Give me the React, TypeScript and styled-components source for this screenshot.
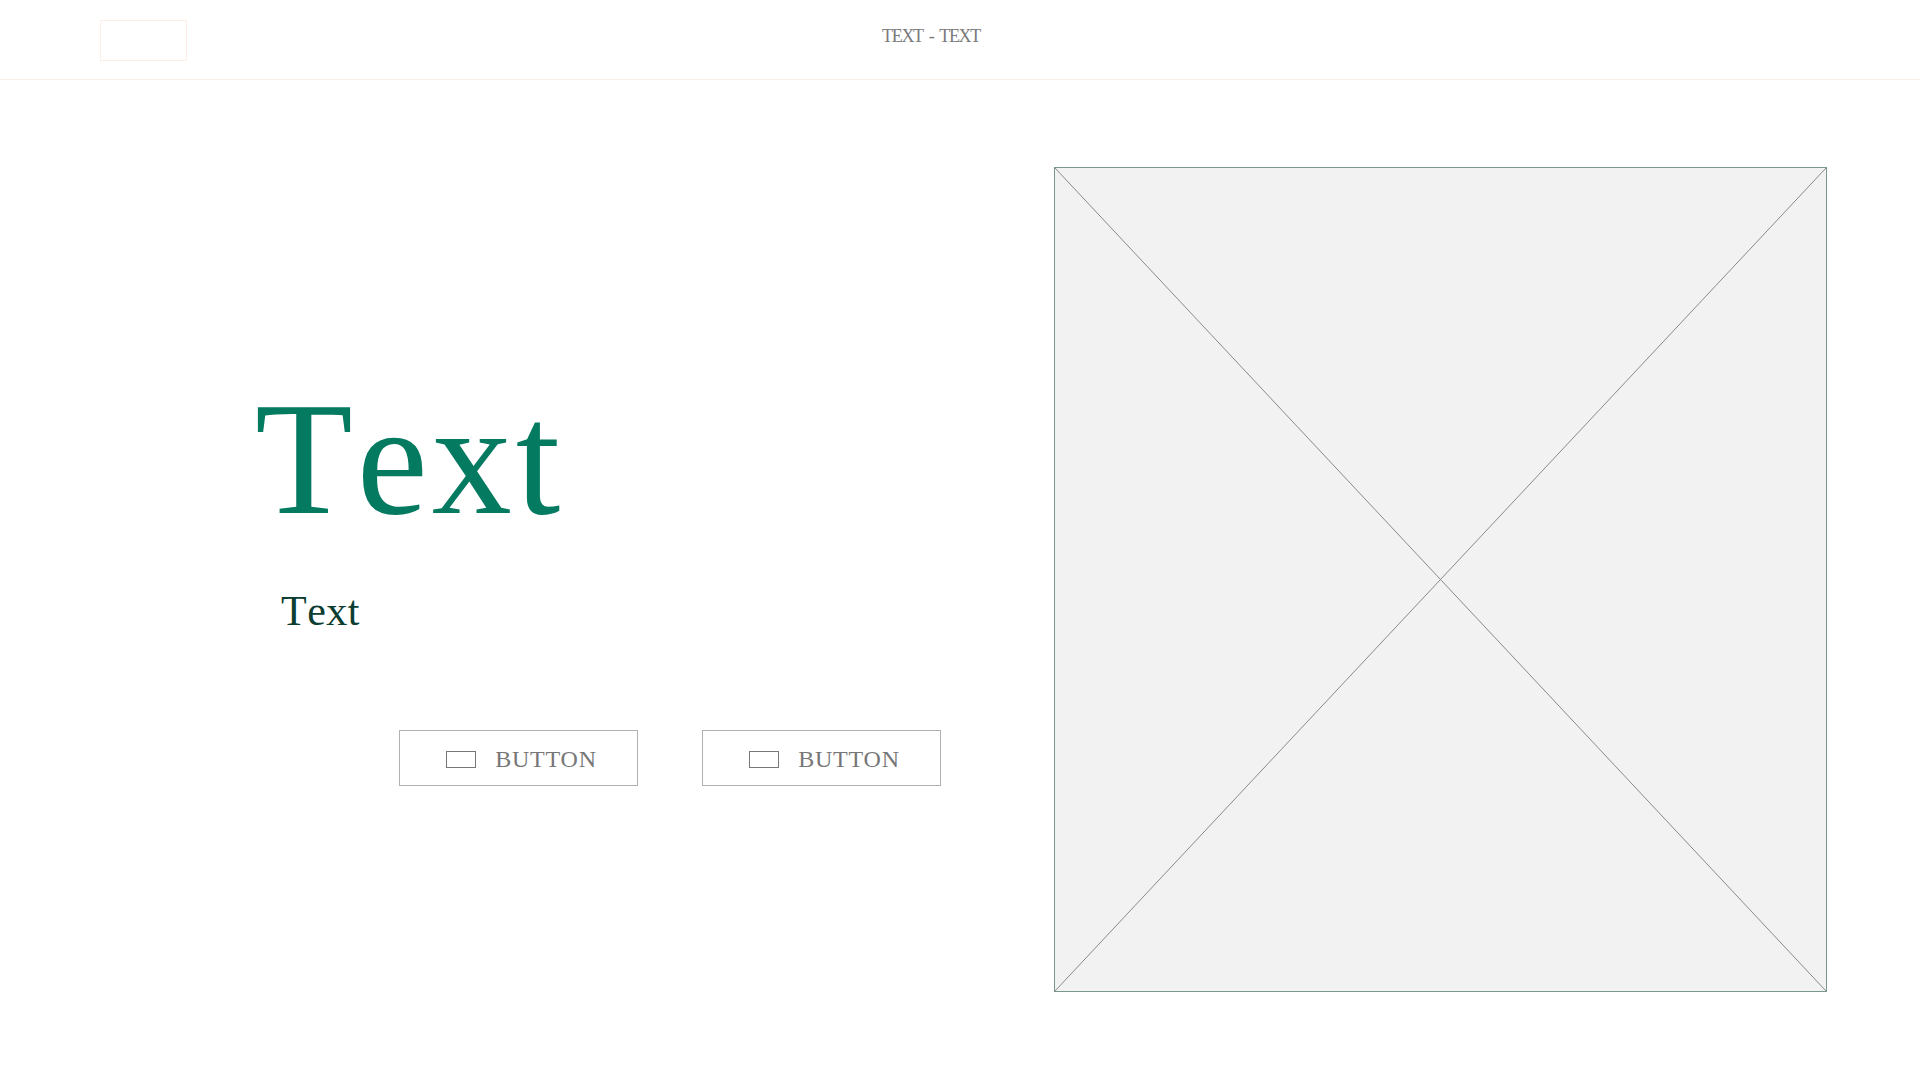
import React from "react";
import styled, { createGlobalStyle } from "styled-components";

const GlobalStyle = createGlobalStyle`
  html, body { margin: 0; padding: 0; background: #ffffff; }
  body { font-family: "Liberation Serif", "Times New Roman", serif; }
  * { box-sizing: border-box; }
`;

const Page = styled.div`
  width: 1920px;
  min-height: 1080px;
  background: #ffffff;
  display: flex;
  flex-direction: column;
`;

const Header = styled.header`
  height: 80px;
  border-bottom: 1px solid #fdefe5;
  display: flex;
  align-items: flex-start;
  padding: 20px 0 0 100px;
`;

const Logo = styled.div`
  width: 87px;
  height: 41px;
  border: 1px solid #fdefe5;
`;

const HeaderTitle = styled.div`
  margin: 7px 0 0 695px;
  font-family: "Liberation Serif", serif;
  font-size: 18px;
  letter-spacing: -1.3px;
  word-spacing: 3px;
  color: #7a7a7a;
  line-height: 1;
`;

const Main = styled.main`
  display: flex;
  align-items: flex-start;
  padding: 87px 93px 87px 0;
`;

const Left = styled.section`
  flex: 1;
  display: flex;
  flex-direction: column;
  padding-top: 212px;
`;

const Headline = styled.h1`
  margin: 0 0 0 255px;
  font-family: "Liberation Serif", serif;
  font-weight: 400;
  font-size: 160px;
  line-height: 1;
  letter-spacing: 4px;
  font-kerning: none;
  color: #047a61;
`;

const Subline = styled.p`
  margin: 51px 0 0 281px;
  font-family: "Liberation Serif", serif;
  font-size: 42px;
  line-height: 1;
  letter-spacing: 0.5px;
  font-kerning: none;
  color: #0b3d31;
`;

const ButtonRow = styled.div`
  display: flex;
  gap: 64px;
  margin: 98px 0 0 399px;
`;

const Button = styled.button`
  width: 239px;
  height: 56px;
  border: 1px solid #b0b0b0;
  background: #ffffff;
  display: flex;
  align-items: center;
  justify-content: center;
  gap: 19px;
  padding: 2px 0 0 6px;
  font-family: "Liberation Serif", serif;
  font-size: 24px;
  letter-spacing: 0.8px;
  color: #777777;
  cursor: pointer;
`;

const ButtonIcon = styled.span`
  display: block;
  width: 30px;
  height: 17px;
  border: 1px solid #777777;
`;

const ImageBox = styled.div`
  width: 773px;
  height: 825px;
  border: 1px solid #7b9590;
  background: #f2f2f2;
  flex-shrink: 0;
  svg {
    display: block;
    width: 100%;
    height: 100%;
  }
`;

export default function App() {
  return (
    <>
      <GlobalStyle />
      <Page>
        <Header>
          <Logo />
          <HeaderTitle>TEXT - TEXT</HeaderTitle>
        </Header>
        <Main>
          <Left>
            <Headline>Text</Headline>
            <Subline>Text</Subline>
            <ButtonRow>
              <Button>
                <ButtonIcon />
                BUTTON
              </Button>
              <Button>
                <ButtonIcon />
                BUTTON
              </Button>
            </ButtonRow>
          </Left>
          <ImageBox>
            <svg viewBox="0 0 771 823" preserveAspectRatio="none">
              <line x1="0" y1="0" x2="771" y2="823" stroke="#8a8a8a" strokeWidth="1" />
              <line x1="771" y1="0" x2="0" y2="823" stroke="#8a8a8a" strokeWidth="1" />
            </svg>
          </ImageBox>
        </Main>
      </Page>
    </>
  );
}
